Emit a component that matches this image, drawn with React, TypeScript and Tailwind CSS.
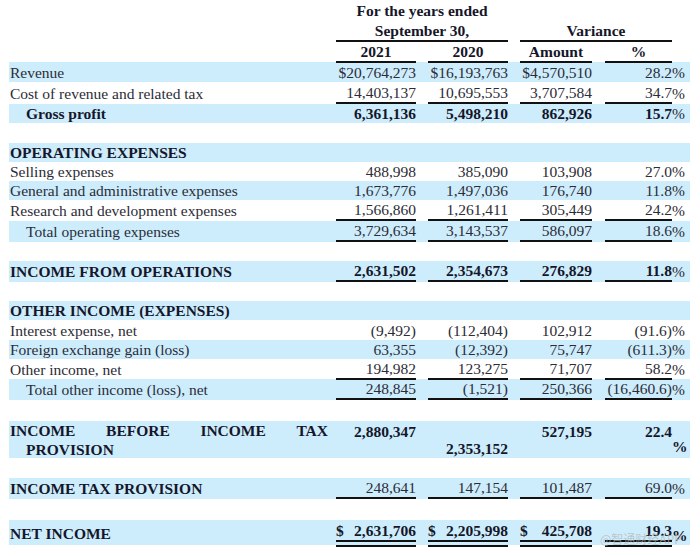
import React from "react";

const GRID = "grid grid-cols-[327px_80px_12px_80px_12px_72px_13px_67px_18px]";
const BAND = "bg-[#cdedfd]";
const RULE = "border-b-2 border-[#111]";
const DOUBLE = "border-b-[7px] border-double border-[#111]";

type Row = {
  label?: string;
  vals?: string[];
  pct?: boolean;
  band?: boolean;
  bold?: boolean;
  boldVals?: boolean;
  indent?: boolean;
  rule?: "single" | "double";
  h: string;
};

const rows: Row[] = [
  { label: "Revenue", vals: ["$20,764,273", "$16,193,763", "$4,570,510", "28.2"], pct: true, band: true, h: "h-[20px]" },
  { label: "Cost of revenue and related tax", vals: ["14,403,137", "10,695,553", "3,707,584", "34.7"], pct: true, rule: "single", h: "h-[22px]" },
  { label: "Gross profit", vals: ["6,361,136", "5,498,210", "862,926", "15.7"], pct: true, band: true, bold: true, boldVals: true, indent: true, h: "h-[19px]" },
  { h: "h-[20px]" },
  { label: "OPERATING EXPENSES", band: true, bold: true, h: "h-[19px]" },
  { label: "Selling expenses", vals: ["488,998", "385,090", "103,908", "27.0"], pct: true, h: "h-[19px]" },
  { label: "General and administrative expenses", vals: ["1,673,776", "1,497,036", "176,740", "11.8"], pct: true, band: true, h: "h-[19px]" },
  { label: "Research and development expenses", vals: ["1,566,860", "1,261,411", "305,449", "24.2"], pct: true, rule: "single", h: "h-[21px]" },
  { label: "Total operating expenses", vals: ["3,729,634", "3,143,537", "586,097", "18.6"], pct: true, band: true, indent: true, rule: "single", h: "h-[21px]" },
  { h: "h-[19px]" },
  { label: "INCOME FROM OPERATIONS", vals: ["2,631,502", "2,354,673", "276,829", "11.8"], pct: true, band: true, bold: true, boldVals: true, rule: "single", h: "h-[21px]" },
  { h: "h-[19px]" },
  { label: "OTHER INCOME (EXPENSES)", band: true, bold: true, h: "h-[19px]" },
  { label: "Interest expense, net", vals: ["(9,492)", "(112,404)", "102,912", "(91.6)"], pct: true, h: "h-[20px]" },
  { label: "Foreign exchange gain (loss)", vals: ["63,355", "(12,392)", "75,747", "(611.3)"], pct: true, band: true, h: "h-[19px]" },
  { label: "Other income, net", vals: ["194,982", "123,275", "71,707", "58.2"], pct: true, rule: "single", h: "h-[20px]" },
  { label: "Total other income (loss), net", vals: ["248,845", "(1,521)", "250,366", "(16,460.6)"], pct: true, band: true, indent: true, rule: "single", h: "h-[21px]" },
  { h: "h-[21px]" },
];

function Cells({ r }: { r: Row }) {
  const ruleCls = r.rule === "single" ? RULE : r.rule === "double" ? DOUBLE : "";
  const vals = r.vals ?? ["", "", "", ""];
  return (
    <>
      {vals.map((v, i) => (
        <React.Fragment key={i}>
          <div className={`flex items-center justify-end ${r.vals ? ruleCls : ""} ${r.boldVals ? "font-bold text-[#16162a]" : ""}`}>
            {v}
          </div>
          {i < 3 ? <div /> : (
            <div className="flex items-center">{r.pct ? "%" : ""}</div>
          )}
        </React.Fragment>
      ))}
    </>
  );
}

export default function App() {
  return (
    <div className="relative w-[700px] h-[556px] bg-white overflow-hidden font-['Liberation_Serif',serif] text-[15.5px] leading-[19px] text-[#2c2c36]">
      <div className="ml-[9px] w-[681px]">
        {/* header */}
        <div className={`${GRID} h-[20px]`}>
          <div />
          <div className="col-span-3 flex items-center justify-center font-bold text-[#16162a]">For the years ended</div>
        </div>
        <div className={`${GRID} h-[22px] font-bold text-[#16162a]`}>
          <div />
          <div className={`col-span-3 flex items-center justify-center ${RULE}`}>September 30,</div>
          <div />
          <div className={`col-span-3 flex items-center justify-center ${RULE}`}>Variance</div>
        </div>
        <div className={`${GRID} h-[20px] font-bold text-[#16162a]`}>
          <div />
          <div className={`flex items-center justify-center ${RULE}`}>2021</div>
          <div />
          <div className={`flex items-center justify-center ${RULE}`}>2020</div>
          <div />
          <div className={`flex items-center justify-center ${RULE}`}>Amount</div>
          <div />
          <div className={`flex items-center justify-center ${RULE}`}>%</div>
        </div>

        {rows.map((r, i) => (
          <div key={i} className={`${GRID} ${r.h} ${r.band ? BAND : ""}`}>
            <div className={`flex items-center ${r.indent ? "pl-[17px]" : "pl-px"} ${r.bold ? "font-bold text-[#16162a]" : ""}`}>
              {r.label}
            </div>
            <Cells r={r} />
          </div>
        ))}

        {/* income before income tax provision */}
        <div className={`${GRID} h-[37px] ${BAND} font-bold text-[#16162a]`}>
          <div className="flex flex-col justify-center">
            <div className="flex justify-between w-[319px] pl-px">
              <span>INCOME</span>
              <span>BEFORE</span>
              <span>INCOME</span>
              <span>TAX</span>
            </div>
            <div className="pl-[17px]">PROVISION</div>
          </div>
          <div className="flex items-start justify-end pt-px">2,880,347</div>
          <div />
          <div className="flex items-end justify-end pb-px">2,353,152</div>
          <div />
          <div className="flex items-start justify-end pt-px">527,195</div>
          <div />
          <div className="flex items-start justify-end pt-px">22.4</div>
          <div className="flex items-end pb-[3px]">%</div>
        </div>

        <div className={`${GRID} h-[20px]`} />

        <div className={`${GRID} h-[21px] ${BAND}`}>
          <div className="flex items-center pl-px font-bold text-[#16162a]">INCOME TAX PROVISION</div>
          <Cells r={{ vals: ["248,641", "147,154", "101,487", "69.0"], pct: true, rule: "single", h: "" }} />
        </div>

        <div className={`${GRID} h-[21px]`} />

        <div className={`${GRID} h-[25px] ${BAND} font-bold text-[#16162a]`}>
          <div className="flex items-center pl-px">NET INCOME</div>
          {["2,631,706", "2,205,998", "425,708"].map((v) => (
            <React.Fragment key={v}>
              <div className={`flex items-start justify-between pt-px ${DOUBLE}`}>
                <span>$</span>
                <span>{v}</span>
              </div>
              <div />
            </React.Fragment>
          ))}
          <div className={`flex items-start justify-end pt-px ${DOUBLE}`}>19.3</div>
          <div className="flex items-start pt-[6px]">%</div>
        </div>
      </div>

      <div className="absolute left-[600px] top-[531px] text-[12px] leading-[15px] font-['Noto_Sans_CJK_SC',sans-serif] text-[#b4b4b4]/70">
        @智通财经APP
      </div>
    </div>
  );
}
